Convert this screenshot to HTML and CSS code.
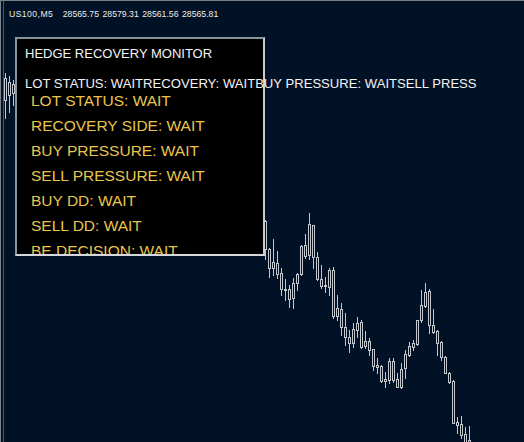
FILE: index.html
```html
<!DOCTYPE html>
<html lang="en">
<head>
<meta charset="utf-8">
<title>US100,M5</title>
<link rel="stylesheet" href="styles.css">
</head>
<body>
<main class="chart">
  <svg class="plot" id="plot" width="524" height="442" viewBox="0 0 524 442" shape-rendering="crispEdges"></svg>

  <div class="quote">
    <span class="quote-symbol">US100,M5</span>
    <span class="quote-price">28565.75</span>
    <span class="quote-price">28579.31</span>
    <span class="quote-price">28561.56</span>
    <span class="quote-price">28565.81</span>
  </div>

  <section class="monitor">
    <h1 class="monitor-title">HEDGE RECOVERY MONITOR</h1>
    <p class="monitor-summary">LOT STATUS: WAITRECOVERY: WAITBUY PRESSURE: WAITSELL PRESS</p>
    <ul class="monitor-rows">
      <li>LOT STATUS: WAIT</li>
      <li>RECOVERY SIDE: WAIT</li>
      <li>BUY PRESSURE: WAIT</li>
      <li>SELL PRESSURE: WAIT</li>
      <li>BUY DD: WAIT</li>
      <li>SELL DD: WAIT</li>
      <li>BE DECISION: WAIT</li>
    </ul>
  </section>
</main>
<script src="app.js"></script>
</body>
</html>
```

FILE: styles.css
```css
html,
body {
  margin: 0;
  padding: 0;
}

body {
  background: #021226;
  overflow: hidden;
  font-family: "Liberation Sans", Arial, sans-serif;
}

/* chart window: thin frame on the top and left edges */
.chart {
  position: relative;
  width: 524px;
  height: 442px;
  box-shadow: inset 1px 1px 0 #7b828a;
}

.plot {
  display: block;
}

.plot .axis-line {
  stroke: #4b5866;
}

.plot .candle {
  stroke: #c3c8ce;
  stroke-width: 1;
  fill: #021226;
}

/* symbol + OHLC line in the corner */
.quote {
  position: absolute;
  left: 9px;
  top: 9px;
  display: flex;
  gap: 3.5px;
  font-size: 8.7px;
  line-height: 11px;
  color: #ececec;
  white-space: nowrap;
}

.quote-symbol {
  margin-right: 6px;
  letter-spacing: 0.4px;
}

/* monitor panel drawn over the chart */
.monitor {
  position: absolute;
  left: 15px;
  top: 37px;
  box-sizing: border-box;
  width: 250px;
  height: 219px;
  padding: 0 0 0 8px;
  background: #000;
  border: 2px solid;
  border-color: #8a949f #c8cdd2 #d4d8dc #8a949f;
  overflow-x: visible;
  overflow-y: clip;
}

.monitor-title {
  margin: 0;
  font-size: 13px;
  font-weight: normal;
  line-height: 30px;
  color: #f4f4f4;
  white-space: nowrap;
}

.monitor-summary {
  margin: 8px 0 0;
  font-size: 13.1px;
  line-height: 14px;
  color: #f4f4f4;
  white-space: nowrap;
}

.monitor-rows {
  list-style: none;
  margin: 0;
  padding: 0 0 0 6px;
  display: flex;
  flex-direction: column;
  gap: 5px;
}

.monitor-rows li {
  font-size: 15.5px;
  line-height: 20px;
  color: #e8c64e;
  white-space: nowrap;
}
```

FILE: app.js
```javascript
// M5 bars: [wick column, high, low, body top, body bottom] in chart pixels
const bars = [
  [5, 73, 118, 78, 100],
  [9, 76, 112, 82, 95],
  [13, 80, 105, 84, 93],
  [265, 220, 259, 221, 249],
  [269, 248, 277, 249, 268],
  [273, 239, 275, 262, 268],
  [277, 251, 278, 263, 274],
  [281, 268, 295, 273, 289],
  [285, 279, 300, 289, 290],
  [289, 285, 307, 289, 299],
  [293, 278, 308, 283, 298],
  [297, 273, 290, 274, 283],
  [301, 245, 275, 246, 274],
  [305, 234, 258, 245, 256],
  [309, 213, 259, 224, 255],
  [313, 225, 268, 225, 257],
  [317, 252, 280, 257, 279],
  [321, 265, 288, 279, 286],
  [325, 277, 292, 285, 286],
  [329, 268, 295, 270, 287],
  [333, 267, 318, 270, 316],
  [337, 295, 320, 308, 316],
  [341, 303, 335, 309, 327],
  [345, 313, 345, 327, 337],
  [349, 330, 352, 337, 343],
  [353, 323, 347, 329, 343],
  [357, 317, 337, 323, 330],
  [361, 320, 348, 322, 347],
  [365, 331, 348, 341, 346],
  [369, 338, 355, 341, 350],
  [373, 349, 370, 349, 366],
  [377, 358, 373, 365, 367],
  [381, 365, 382, 366, 381],
  [385, 372, 387, 379, 381],
  [389, 358, 383, 361, 380],
  [393, 358, 382, 361, 380],
  [397, 373, 387, 379, 387],
  [401, 363, 388, 369, 387],
  [405, 350, 378, 354, 368],
  [409, 342, 356, 346, 355],
  [413, 340, 350, 343, 347],
  [417, 320, 345, 320, 344],
  [421, 290, 322, 305, 320],
  [425, 283, 307, 292, 306],
  [429, 289, 333, 291, 325],
  [433, 309, 333, 325, 332],
  [437, 330, 355, 331, 343],
  [441, 341, 360, 342, 357],
  [445, 356, 373, 357, 373],
  [449, 372, 383, 373, 382],
  [453, 380, 423, 381, 423],
  [457, 417, 433, 422, 425],
  [461, 416, 438, 424, 435],
  [465, 427, 445, 434, 445],
  [469, 426, 450, 440, 450]
];

const NS = "http://www.w3.org/2000/svg";
const plot = document.getElementById("plot");

function el(name, attrs) {
  const node = document.createElementNS(NS, name);
  for (const k in attrs) node.setAttribute(k, attrs[k]);
  return node;
}

// left edge rule of the chart area
plot.appendChild(el("line", { class: "axis-line", x1: 3.5, y1: 1, x2: 3.5, y2: 442 }));

for (const [x, hi, lo, top, bottom] of bars) {
  const g = el("g", { class: "candle" });
  g.appendChild(el("line", { x1: x + 0.5, y1: hi, x2: x + 0.5, y2: lo + 1 }));
  g.appendChild(el("rect", {
    x: x - 0.5,
    y: top + 0.5,
    width: 2,
    height: Math.max(1, bottom - top)
  }));
  plot.appendChild(g);
}
```
